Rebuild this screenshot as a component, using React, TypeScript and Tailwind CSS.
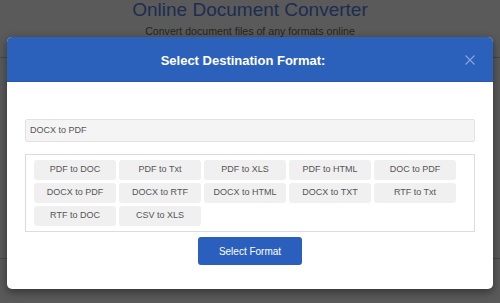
import React, { useState } from 'react';

const formats = [
    'PDF to DOC',
    'PDF to Txt',
    'PDF to XLS',
    'PDF to HTML',
    'DOC to PDF',
    'DOCX to PDF',
    'DOCX to RTF',
    'DOCX to HTML',
    'DOCX to TXT',
    'RTF to Txt',
    'RTF to DOC',
    'CSV to XLS',
];

const App: React.FC = () => {
    const [selected, setSelected] = useState('DOCX to PDF');

    return (
        <div className="relative w-full h-[303px] overflow-hidden bg-[#5a5a5a] font-['Liberation_Sans',Arial,sans-serif]">
            {/* Page behind the overlay */}
            <div className="text-center">
                <h1 className="text-[19px] leading-[20px] text-[#1c2d52]">Online Document Converter</h1>
                <p className="mt-[4px] text-[10.6px] leading-[14px] text-[#242424]">
                    Convert document files of any formats online
                </p>
                <div className="mt-[19px] border-t border-[#474747]" />
                <div className="mt-[200px] border-t border-[#474747]" />
            </div>

            {/* Modal */}
            <div className="absolute inset-0 flex justify-center pt-[37px]">
                <div className="w-[486px] h-[252px] flex flex-col rounded-[5px] overflow-hidden bg-white shadow-[0_3px_10px_rgba(0,0,0,0.45)]">
                    <div className="h-[45px] shrink-0 flex items-center pl-[14px] pr-[18px] bg-[#2c61bb] border-b border-[#2958aa]">
                        <h2 className="flex-1 text-center text-[13px] font-bold text-white pt-[3px]">
                            Select Destination Format:
                        </h2>
                        <svg width="10" height="10" viewBox="0 0 10 10" className="mt-[2px]">
                            <path d="M0.5 0.5 L9.5 9.5 M9.5 0.5 L0.5 9.5" stroke="#86a6e0" strokeWidth="1.1" />
                        </svg>
                    </div>

                    <div className="flex flex-col px-[18px] pt-[37px]">
                        <div className="h-[23px] flex items-center pl-[4px] bg-[#f4f4f4] border border-[#e2e2e2] rounded-[2px] text-[9px] text-[#555]">
                            {selected}
                        </div>

                        <div className="mt-[12px] flex flex-wrap gap-[3px] pl-[8px] pr-[8px] py-[5px] border border-[#dcdcdc]">
                            {formats.map((f) => (
                                <button
                                    key={f}
                                    onClick={() => setSelected(f)}
                                    className="w-[82px] h-[20px] rounded-[3px] bg-[#f0f0f0] text-[9px] text-[#555]"
                                >
                                    {f}
                                </button>
                            ))}
                        </div>

                        <div className="mt-[5px] flex justify-center">
                            <button className="w-[104px] h-[28px] rounded-[3px] bg-[#2b5fbd] text-[10px] text-white">
                                Select Format
                            </button>
                        </div>
                    </div>
                </div>
            </div>
        </div>
    );
};

export default App;
